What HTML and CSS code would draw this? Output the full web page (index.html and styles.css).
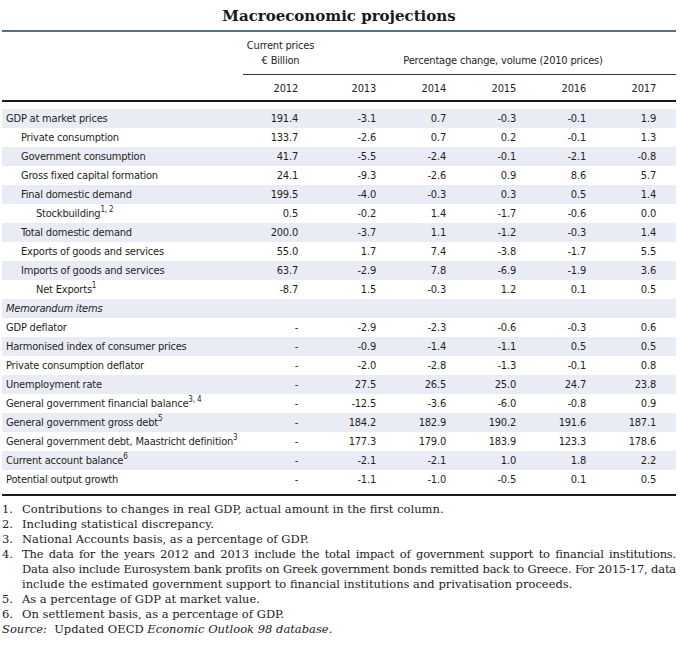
FILE: index.html
```html
<!DOCTYPE html>
<html>
<head>
<meta charset="utf-8">
<link rel="stylesheet" href="styles.css">
</head>
<body>
<div class="page">
  <h1 class="title">Macroeconomic projections</h1>
  <div class="head">
    <div class="hrow">
      <div class="hcell cur">Current prices<br>€ Billion</div>
      <div class="hcell pct">Percentage change, volume (2010 prices)</div>
    </div>
    <div class="grid years">
      <div></div>
      <div class="n">2012</div><div class="n">2013</div><div class="n">2014</div><div class="n">2015</div><div class="n">2016</div><div class="n">2017</div>
    </div>
  </div>
  <div class="body">
    <div class="grid row"><div class="l0">GDP at market prices</div><div class="n">191.4</div><div class="n">-3.1</div><div class="n">0.7</div><div class="n">-0.3</div><div class="n">-0.1</div><div class="n">1.9</div></div>
    <div class="grid row"><div class="l1">Private consumption</div><div class="n">133.7</div><div class="n">-2.6</div><div class="n">0.7</div><div class="n">0.2</div><div class="n">-0.1</div><div class="n">1.3</div></div>
    <div class="grid row"><div class="l1">Government consumption</div><div class="n">41.7</div><div class="n">-5.5</div><div class="n">-2.4</div><div class="n">-0.1</div><div class="n">-2.1</div><div class="n">-0.8</div></div>
    <div class="grid row"><div class="l1">Gross fixed capital formation</div><div class="n">24.1</div><div class="n">-9.3</div><div class="n">-2.6</div><div class="n">0.9</div><div class="n">8.6</div><div class="n">5.7</div></div>
    <div class="grid row"><div class="l1">Final domestic demand</div><div class="n">199.5</div><div class="n">-4.0</div><div class="n">-0.3</div><div class="n">0.3</div><div class="n">0.5</div><div class="n">1.4</div></div>
    <div class="grid row"><div class="l2">Stockbuilding<sup>1, 2</sup></div><div class="n">0.5</div><div class="n">-0.2</div><div class="n">1.4</div><div class="n">-1.7</div><div class="n">-0.6</div><div class="n">0.0</div></div>
    <div class="grid row"><div class="l1">Total domestic demand</div><div class="n">200.0</div><div class="n">-3.7</div><div class="n">1.1</div><div class="n">-1.2</div><div class="n">-0.3</div><div class="n">1.4</div></div>
    <div class="grid row"><div class="l1">Exports of goods and services</div><div class="n">55.0</div><div class="n">1.7</div><div class="n">7.4</div><div class="n">-3.8</div><div class="n">-1.7</div><div class="n">5.5</div></div>
    <div class="grid row"><div class="l1">Imports of goods and services</div><div class="n">63.7</div><div class="n">-2.9</div><div class="n">7.8</div><div class="n">-6.9</div><div class="n">-1.9</div><div class="n">3.6</div></div>
    <div class="grid row"><div class="l2">Net Exports<sup>1</sup></div><div class="n">-8.7</div><div class="n">1.5</div><div class="n">-0.3</div><div class="n">1.2</div><div class="n">0.1</div><div class="n">0.5</div></div>
    <div class="grid row"><div class="l0 it">Memorandum items</div><div></div><div></div><div></div><div></div><div></div><div></div></div>
    <div class="grid row"><div class="l0">GDP deflator</div><div class="n">-</div><div class="n">-2.9</div><div class="n">-2.3</div><div class="n">-0.6</div><div class="n">-0.3</div><div class="n">0.6</div></div>
    <div class="grid row"><div class="l0">Harmonised index of consumer prices</div><div class="n">-</div><div class="n">-0.9</div><div class="n">-1.4</div><div class="n">-1.1</div><div class="n">0.5</div><div class="n">0.5</div></div>
    <div class="grid row"><div class="l0">Private consumption deflator</div><div class="n">-</div><div class="n">-2.0</div><div class="n">-2.8</div><div class="n">-1.3</div><div class="n">-0.1</div><div class="n">0.8</div></div>
    <div class="grid row"><div class="l0">Unemployment rate</div><div class="n">-</div><div class="n">27.5</div><div class="n">26.5</div><div class="n">25.0</div><div class="n">24.7</div><div class="n">23.8</div></div>
    <div class="grid row"><div class="l0">General government financial balance<sup>3, 4</sup></div><div class="n">-</div><div class="n">-12.5</div><div class="n">-3.6</div><div class="n">-6.0</div><div class="n">-0.8</div><div class="n">0.9</div></div>
    <div class="grid row"><div class="l0">General government gross debt<sup>5</sup></div><div class="n">-</div><div class="n">184.2</div><div class="n">182.9</div><div class="n">190.2</div><div class="n">191.6</div><div class="n">187.1</div></div>
    <div class="grid row"><div class="l0">General government debt, Maastricht definition<sup>3</sup></div><div class="n">-</div><div class="n">177.3</div><div class="n">179.0</div><div class="n">183.9</div><div class="n">123.3</div><div class="n">178.6</div></div>
    <div class="grid row"><div class="l0">Current account balance<sup>6</sup></div><div class="n">-</div><div class="n">-2.1</div><div class="n">-2.1</div><div class="n">1.0</div><div class="n">1.8</div><div class="n">2.2</div></div>
    <div class="grid row"><div class="l0">Potential output growth</div><div class="n">-</div><div class="n">-1.1</div><div class="n">-1.0</div><div class="n">-0.5</div><div class="n">0.1</div><div class="n">0.5</div></div>
  </div>
  <div class="notes">
    <div class="note"><span class="num">1.</span><span>Contributions to changes in real GDP, actual amount in the first column.</span></div>
    <div class="note"><span class="num">2.</span><span>Including statistical discrepancy.</span></div>
    <div class="note"><span class="num">3.</span><span>National Accounts basis, as a percentage of GDP.</span></div>
    <div class="note"><span class="num">4.</span><span><span class="jl">The data for the years 2012 and 2013 include the total impact of government support to financial institutions.</span><span class="jl">Data also include Eurosystem bank profits on Greek government bonds remitted back to Greece. For 2015-17, data</span><span class="ln">include the estimated government support to financial institutions and privatisation proceeds.</span></span></div>
    <div class="note"><span class="num">5.</span><span>As a percentage of GDP at market value.</span></div>
    <div class="note"><span class="num">6.</span><span>On settlement basis, as a percentage of GDP.</span></div>
    <div class="source"><i>Source:</i>&nbsp; Updated OECD <i>Economic Outlook 98 database</i>.</div>
  </div>
</div>
</body>
</html>
```

FILE: styles.css
```css
html, body {
  margin: 0;
  padding: 0;
  background: #ffffff;
}

.page {
  width: 674px;
  margin-left: 2px;
  color: #222222;
}

.title {
  margin: 0;
  padding: 4px 0 2px 0;
  line-height: 24px;
  font-family: "DejaVu Serif", "Liberation Serif", serif;
  font-weight: bold;
  font-size: 15px;
  text-align: center;
  color: #1a1a1a;
  border-bottom: 2px solid #4b7394;
}

.head,
.body {
  font-family: "DejaVu Sans Condensed", "DejaVu Sans", sans-serif;
  font-stretch: condensed;
  font-size: 11px;
  letter-spacing: -0.2px;
  color: #1f1f1f;
}

.head {
  line-height: 15px;
  border-bottom: 2px solid #1a1a1a;
}

.hrow {
  display: grid;
  grid-template-columns: 241px 75px 358px;
}

.hcell {
  padding: 6px 0 6px 0;
  border-bottom: 1px solid #333333;
  text-align: center;
  white-space: nowrap;
}

.cur {
  grid-column: 2;
}

.pct {
  grid-column: 3;
  align-self: end;
  padding-left: 12px;
}

.grid {
  display: grid;
  grid-template-columns: 241px 75px 78px 70px 70px 70px 70px;
}

.years {
  padding: 6px 0 4px 0;
}

.n {
  text-align: right;
  padding-right: 20px;
}

.body {
  padding: 7px 0 5px 0;
  border-bottom: 2px solid #1a1a1a;
}

.row {
  height: 19px;
  line-height: 19px;
}

.row:nth-child(odd) {
  background: #e9ecf5;
}

.l0 { padding-left: 4px; white-space: nowrap; }
.l1 { padding-left: 19px; white-space: nowrap; }
.l2 { padding-left: 34px; white-space: nowrap; }
.it { font-style: italic; }

sup {
  font-size: 8px;
  line-height: 0;
  vertical-align: 5px;
}

.notes {
  padding-top: 6px;
  font-family: "DejaVu Serif", "Liberation Serif", serif;
  font-size: 11.5px;
  line-height: 15px;
  color: #222222;
}

.note {
  display: grid;
  grid-template-columns: 20px 1fr;
}

.num {
  text-align: left;
}

.jl {
  display: block;
  white-space: nowrap;
  letter-spacing: -0.2px;
  word-spacing: -0.8px;
  text-align: justify;
  text-align-last: justify;
}

.ln {
  display: block;
  white-space: nowrap;
}

.source {
  white-space: nowrap;
}
```
